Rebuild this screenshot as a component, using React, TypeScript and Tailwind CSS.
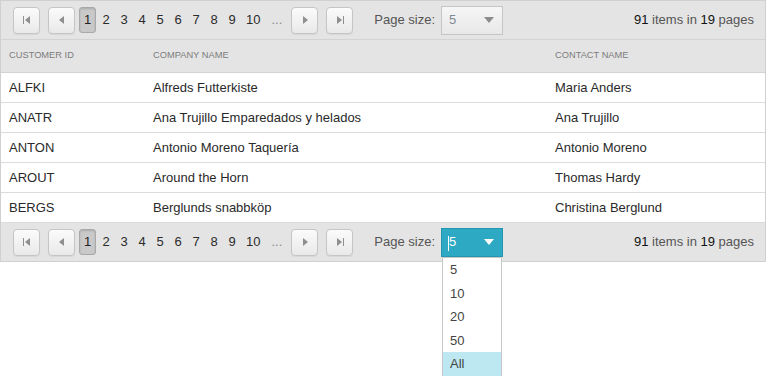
import React from "react";

const rows = [
  ["ALFKI", "Alfreds Futterkiste", "Maria Anders"],
  ["ANATR", "Ana Trujillo Emparedados y helados", "Ana Trujillo"],
  ["ANTON", "Antonio Moreno Taquería", "Antonio Moreno"],
  ["AROUT", "Around the Horn", "Thomas Hardy"],
  ["BERGS", "Berglunds snabbköp", "Christina Berglund"],
];

function NavBtn({ kind, className }: { kind: "first" | "prev" | "next" | "last"; className?: string }) {
  return (
    <div
      className={
        "w-[27px] h-[27px] rounded-[4px] border border-[#c5c5c5] bg-linear-to-b from-[#fbfbfb] to-[#e9e9e9] flex items-center justify-center shadow-[0_1px_1px_rgba(0,0,0,0.06)] " +
        (className || "")
      }
    >
      <svg width="14" height="14" viewBox="0 0 14 14">
        {kind === "first" && (
          <>
            <rect x="3" y="3" width="1" height="8" fill="#8f8f8f" />
            <polygon points="10,3 10,11 5,7" fill="#8f8f8f" />
          </>
        )}
        {kind === "prev" && <polygon points="9,3 9,11 4,7" fill="#8f8f8f" />}
        {kind === "next" && <polygon points="5,3 5,11 10,7" fill="#8f8f8f" />}
        {kind === "last" && (
          <>
            <polygon points="4,3 4,11 9,7" fill="#8f8f8f" />
            <rect x="10" y="3" width="1" height="8" fill="#8f8f8f" />
          </>
        )}
      </svg>
    </div>
  );
}

function Pager({ open }: { open?: boolean }) {
  const pages = ["1", "2", "3", "4", "5", "6", "7", "8", "9", "10"];
  return (
    <div className="h-[38px] flex items-center bg-[#e4e4e4] text-[13px] relative">
      <NavBtn kind="first" className="ml-[12px]" />
      <NavBtn kind="prev" className="ml-[8px]" />
      <div className="flex items-center ml-[3px]">
        {pages.map((p, i) =>
          i === 0 ? (
            <div
              key={p}
              className="w-[17px] h-[26px] mx-px flex items-center justify-center rounded-[3px] border border-[#a9a9a9] bg-[#c9c9c9] shadow-[inset_0_1px_2px_rgba(0,0,0,0.15)] text-[#222]"
            >
              {p}
            </div>
          ) : (
            <div key={p} className="min-w-[16px] px-[4px] mx-px text-center text-[#2b2b2b]">
              {p}
            </div>
          )
        )}
        <div className="px-[4px] ml-[2px] text-[#8a8a8a]">...</div>
      </div>
      <NavBtn kind="next" className="ml-[5px]" />
      <NavBtn kind="last" className="ml-[8px]" />
      <div className="ml-[21px] text-[#555]">Page size:</div>
      {open ? (
        <div className="ml-[6px] w-[62px] h-[29px] border border-[#2296ae] bg-[#2ea9c3] flex items-center relative">
          <span className="absolute left-[6px] top-[7px] w-px h-[15px] bg-white" />
          <span className="ml-[7px] text-white">5</span>
          <svg className="ml-auto mr-[8px]" width="10" height="8" viewBox="0 0 10 8">
            <polygon points="0,1 10,1 5,7" fill="#ffffff" />
          </svg>
        </div>
      ) : (
        <div className="ml-[6px] w-[62px] h-[29px] border border-[#c5c5c5] bg-linear-to-b from-[#f6f6f6] to-[#e8e8e8] flex items-center">
          <span className="ml-[7px] text-[#7f8a96]">5</span>
          <svg className="ml-auto mr-[8px]" width="10" height="8" viewBox="0 0 10 8">
            <polygon points="0,1 10,1 5,7" fill="#8c8c8c" />
          </svg>
        </div>
      )}
      <div className="ml-auto mr-[11px] text-[#555]">
        <span className="text-[#111]">91</span> items in <span className="text-[#111]">19</span> pages
      </div>
    </div>
  );
}

export default function App() {
  return (
    <div className="w-[766px] h-[376px] bg-white relative overflow-hidden" style={{ fontFamily: '"Liberation Sans", Arial, sans-serif' }}>
      <div className="border border-[#d0d0d0] w-[766px]">
        <div className="border-b border-[#d3d3d3]">
          <Pager />
        </div>
        <div className="h-[33px] flex items-center bg-[#e4e4e4] border-b border-[#d3d3d3] text-[9.3px] text-[#7c7c7c] uppercase">
          <div className="w-[144px] pl-[8px]">Customer ID</div>
          <div className="w-[402px] pl-[8px]">Company Name</div>
          <div className="flex-1 pl-[8px]">Contact Name</div>
        </div>
        {rows.map((r) => (
          <div key={r[0]} className="h-[30px] flex items-center border-b border-[#dcdcdc] text-[13px] text-[#2a2a2a]">
            <div className="w-[144px] pl-[8px]">{r[0]}</div>
            <div className="w-[402px] pl-[8px]">{r[1]}</div>
            <div className="flex-1 pl-[8px]">{r[2]}</div>
          </div>
        ))}
        <Pager open />
      </div>
      <div className="absolute left-[442px] top-[257px] w-[60px] h-[130px] bg-white border border-[#c9c9c9] text-[13px] text-[#444]">
        {["5", "10", "20", "50", "All"].map((o) => (
          <div
            key={o}
            className={"h-[23.5px] flex items-center pl-[7px] " + (o === "All" ? "bg-[#bde8f1]" : "")}
          >
            {o}
          </div>
        ))}
      </div>
    </div>
  );
}
